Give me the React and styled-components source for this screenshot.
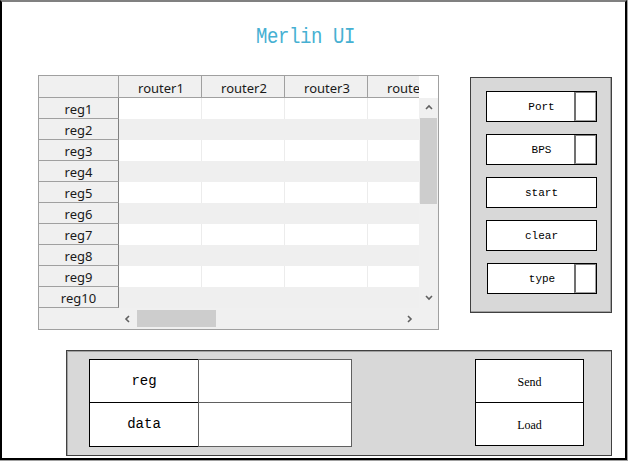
import styled, { createGlobalStyle } from 'styled-components';

const GlobalStyle = createGlobalStyle`
    html, body {
        margin: 0;
        padding: 0;
        background: #ffffff;
    }
    * {
        box-sizing: border-box;
    }
`;

const columns = ['router1', 'router2', 'router3', 'router4'];
const regs = ['reg1', 'reg2', 'reg3', 'reg4', 'reg5', 'reg6', 'reg7', 'reg8', 'reg9', 'reg10'];

const Chevron = ({ dir }) => {
    const paths = {
        up: 'M1 5 L4 2 L7 5',
        down: 'M1 2 L4 5 L7 2',
        left: 'M5 1 L2 4 L5 7',
        right: 'M2 1 L5 4 L2 7',
    };
    return (
        <svg width="8" height="8" viewBox="0 0 8 8">
            <path d={paths[dir]} fill="none" stroke="#606060" strokeWidth="1.6" />
        </svg>
    );
};

const App = () => {
    return (
        <>
            <GlobalStyle />
            <Outer>
                <Window>
                    <Title><span>Merlin UI</span></Title>

                    <MiddleRow>
                        <Table>
                            <CornerCell />
                            <HeaderStrip>
                                {columns.map((c) => (
                                    <HeaderCell key={c}>{c}</HeaderCell>
                                ))}
                            </HeaderStrip>
                            <Blank />

                            <RowHeaders>
                                {regs.map((r) => (
                                    <RowHeader key={r}>{r}</RowHeader>
                                ))}
                            </RowHeaders>
                            <Body>
                                {regs.map((r, i) => (
                                    <DataRow key={r} $alt={i % 2 === 1}>
                                        {columns.map((c) => (
                                            <DataCell key={c} $alt={i % 2 === 1} />
                                        ))}
                                    </DataRow>
                                ))}
                            </Body>
                            <VScroll>
                                <ArrowBox $v><Chevron dir="up" /></ArrowBox>
                                <VThumb />
                                <Spacer />
                                <ArrowBox $v><Chevron dir="down" /></ArrowBox>
                            </VScroll>

                            <ScrollFill />
                            <HScroll>
                                <ArrowBox><Chevron dir="left" /></ArrowBox>
                                <HThumb />
                                <Spacer />
                                <ArrowBox><Chevron dir="right" /></ArrowBox>
                            </HScroll>
                            <ScrollFill />
                        </Table>

                        <SidePanel>
                            <PanelButton>Port<SideBox /></PanelButton>
                            <PanelButton>BPS<SideBox /></PanelButton>
                            <PanelButton>start</PanelButton>
                            <PanelButton>clear</PanelButton>
                            <PanelButton $shift>type<SideBox /></PanelButton>
                        </SidePanel>
                    </MiddleRow>

                    <BottomPanel>
                        <FormGrid>
                            <FormLabel>reg</FormLabel>
                            <FormInput />
                            <FormLabel $second>data</FormLabel>
                            <FormInput $second />
                        </FormGrid>
                        <ActionColumn>
                            <ActionButton>Send</ActionButton>
                            <ActionButton $second>Load</ActionButton>
                        </ActionColumn>
                    </BottomPanel>
                </Window>
            </Outer>
        </>
    );
};

export default App;

const Outer = styled.div`
    width: 628px;
    height: 461px;
    border-right: 1px solid #a0a0a0;
    border-bottom: 1px solid #a0a0a0;
`;

const Window = styled.div`
    width: 627px;
    height: 460px;
    border-top: 2px solid #808080;
    border-left: 2px solid #000000;
    border-right: 2px solid #000000;
    border-bottom: 2px solid #000000;
    display: flex;
    flex-direction: column;
`;

const Title = styled.h1`
    margin: 0;
    padding: 21px 16px 0 0;
    height: 73px;
    text-align: center;
    font: normal 400 19px/28px "Liberation Mono", "DejaVu Sans Mono", monospace;
    color: #46b0d2;
    letter-spacing: -0.4px;

    span {
        display: inline-block;
        transform: scaleY(1.12);
    }
`;

const MiddleRow = styled.div`
    display: flex;
    align-items: flex-start;
    padding-left: 36px;
`;

const Table = styled.div`
    width: 401px;
    height: 255px;
    border: 1px solid #a0a0a0;
    display: grid;
    grid-template-columns: 80px 300px 19px;
    grid-template-rows: 22px 210px 21px;
    background: #ffffff;
    font: normal 400 13px "Noto Sans", "Open Sans", sans-serif;
    color: #1a1a1a;
`;

const CornerCell = styled.div`
    background: #f0f0f0;
    border-right: 1px solid #a0a0a0;
    border-bottom: 1px solid #a0a0a0;
`;

const HeaderStrip = styled.div`
    display: flex;
    overflow: hidden;
    border-bottom: 1px solid #a0a0a0;
    background: #f0f0f0;
`;

const HeaderCell = styled.div`
    flex: 0 0 83px;
    height: 21px;
    padding: 2px 0 0 2px;
    line-height: 20px;
    text-align: center;
    border-right: 1px solid #a0a0a0;
    white-space: nowrap;
    overflow: hidden;
`;

const Blank = styled.div`
    background: #ffffff;
`;

const RowHeaders = styled.div`
    display: flex;
    flex-direction: column;
`;

const RowHeader = styled.div`
    height: 21px;
    padding-top: 2px;
    line-height: 19px;
    text-align: center;
    background: #f0f0f0;
    border-right: 1px solid #808080;
    border-bottom: 1px solid #a0a0a0;
`;

const Body = styled.div`
    display: flex;
    flex-direction: column;
    overflow: hidden;
`;

const DataRow = styled.div`
    display: flex;
    height: 21px;
    background: ${(p) => (p.$alt ? '#efefef' : '#ffffff')};
`;

const DataCell = styled.div`
    flex: 0 0 83px;
    border-right: 1px solid ${(p) => (p.$alt ? '#efefef' : '#ececec')};
`;

const VScroll = styled.div`
    display: flex;
    flex-direction: column;
    background: #f0f0f0;
`;

const HScroll = styled.div`
    display: flex;
    align-items: center;
    background: #f0f0f0;
`;

const ArrowBox = styled.div`
    flex: 0 0 ${(p) => (p.$v ? '20px' : '18px')};
    display: flex;
    align-items: center;
    justify-content: center;
    align-self: stretch;
`;

const VThumb = styled.div`
    height: 86px;
    margin: 0 1px 0 1px;
    background: #cdcdcd;
`;

const HThumb = styled.div`
    width: 79px;
    height: 17px;
    background: #cdcdcd;
`;

const Spacer = styled.div`
    flex: 1;
`;

const ScrollFill = styled.div`
    background: #f0f0f0;
`;

const SidePanel = styled.div`
    margin: 2px 0 0 31px;
    width: 142px;
    height: 236px;
    background: #d8d8d8;
    border: 1px solid #404040;
    box-shadow: inset -1px -1px 0 #a0a0a0;
    padding: 13px 0 0 15px;
    display: flex;
    flex-direction: column;
    gap: 12px;
`;

const PanelButton = styled.div`
    position: relative;
    width: ${(p) => (p.$shift ? '110px' : '111px')};
    margin-left: ${(p) => (p.$shift ? '1px' : '0')};
    height: 31px;
    border: 1px solid #000000;
    background: #ffffff;
    text-align: center;
    font: normal 400 11px/30px "Liberation Mono", "DejaVu Sans Mono", monospace;
    color: #000000;
`;

const SideBox = styled.span`
    position: absolute;
    top: 0;
    right: 0;
    bottom: 0;
    width: 22px;
    background: #ffffff;
    border: 1px solid #a0a0a0;
    border-left: 2px solid #707070;
    border-top: 1px solid #808080;
`;

const BottomPanel = styled.div`
    margin: 20px 0 0 64px;
    width: 546px;
    height: 106px;
    background: #d8d8d8;
    border: 1px solid #404040;
    box-shadow: inset 1px 1px 0 #a0a0a0;
    padding: 8px 27px 0 22px;
    display: flex;
    align-items: flex-start;
    justify-content: space-between;
`;

const FormGrid = styled.div`
    display: grid;
    grid-template-columns: 110px 153px;
    grid-template-rows: 44px 44px;
`;

const FormLabel = styled.div`
    border: 1px solid #000000;
    background: #ffffff;
    margin-top: ${(p) => (p.$second ? '-1px' : '0')};
    text-align: center;
    font: normal 400 14px/42px "Liberation Mono", "DejaVu Sans Mono", monospace;
    color: #000000;
`;

const FormInput = styled.div`
    border: 1px solid #606060;
    background: #ffffff;
    margin-left: -1px;
    margin-top: ${(p) => (p.$second ? '-1px' : '0')};
`;

const ActionColumn = styled.div`
    display: flex;
    flex-direction: column;
`;

const ActionButton = styled.div`
    width: 109px;
    height: 44px;
    border: 1px solid #000000;
    background: #ffffff;
    margin-top: ${(p) => (p.$second ? '-1px' : '0')};
    text-align: center;
    font: normal 400 12px/44px "Liberation Serif", "DejaVu Serif", serif;
    color: #000000;
`;
